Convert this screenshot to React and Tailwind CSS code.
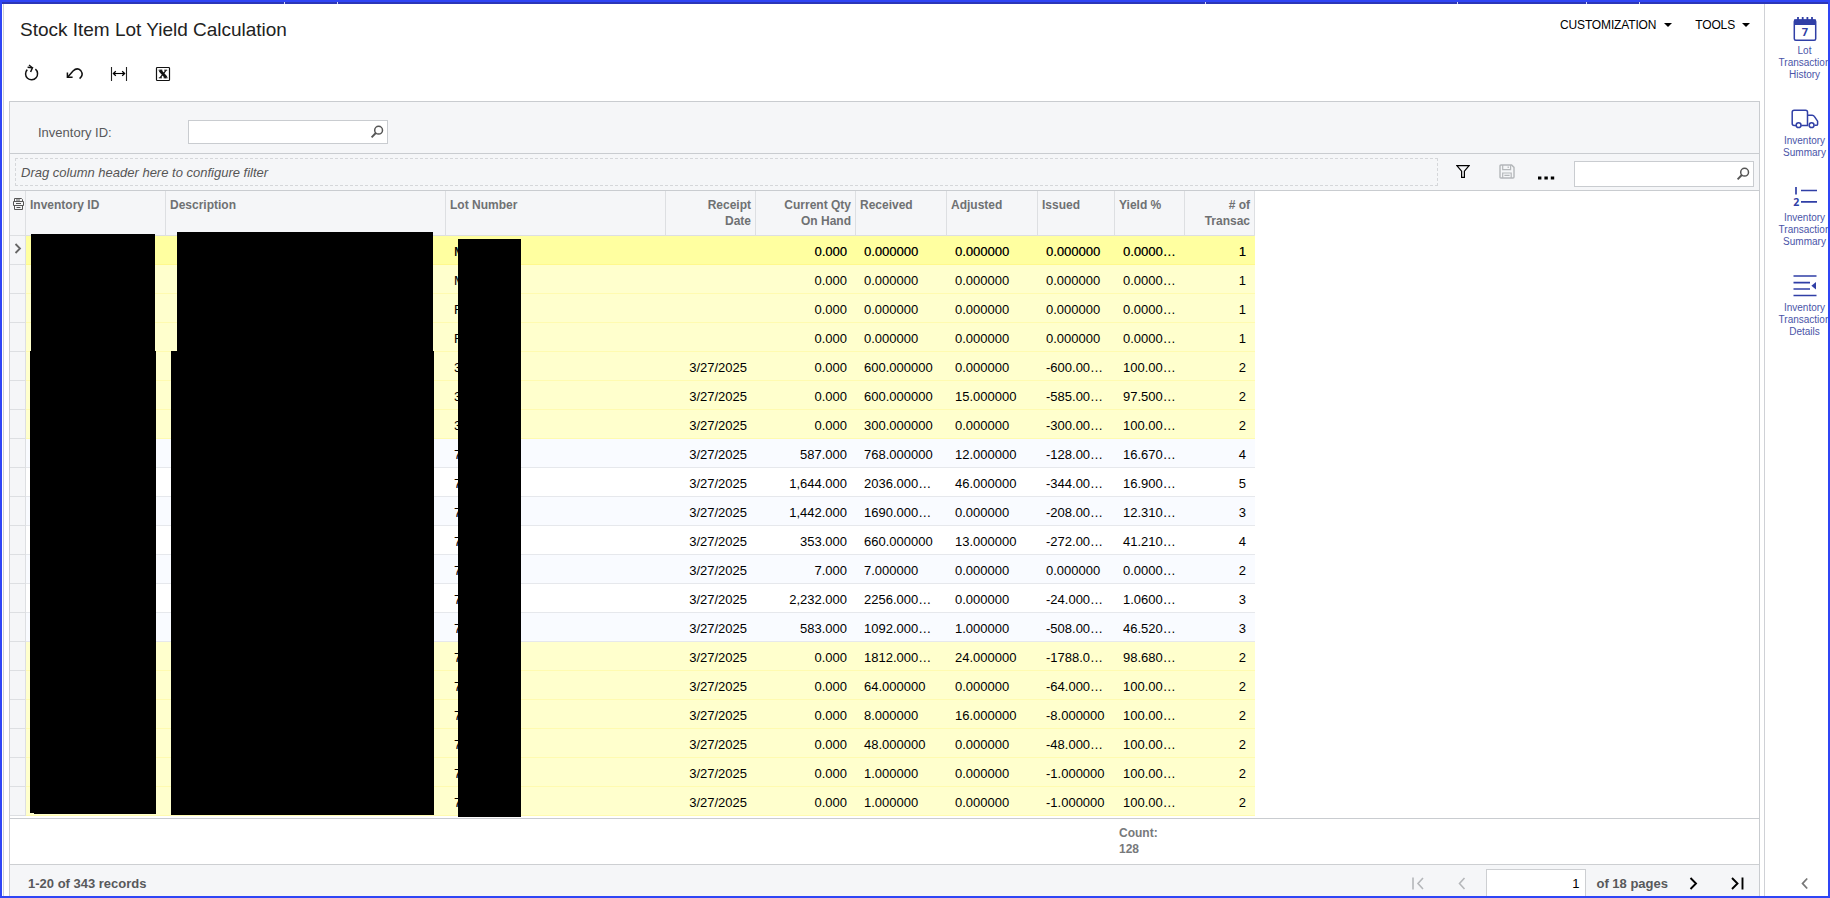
import React from "react";

const COLS = [
  { w: "w-[140px]", label: "Inventory ID" },
  { w: "w-[280px]", label: "Description" },
  { w: "w-[220px]", label: "Lot Number" },
  { w: "w-[90px]", label: "Receipt\nDate", right: true },
  { w: "w-[100px]", label: "Current Qty\nOn Hand", right: true },
  { w: "w-[91px]", label: "Received" },
  { w: "w-[91px]", label: "Adjusted" },
  { w: "w-[77px]", label: "Issued" },
  { w: "w-[70px]", label: "Yield %" },
  { w: "w-[70px]", label: "# of\nTransac", right: true },
];

const D = "3/27/2025";
const ROWS = [
  ["M", "", "0.000", "0.000000", "0.000000", "0.000000", "0.0000…", "1", "a"],
  ["M", "", "0.000", "0.000000", "0.000000", "0.000000", "0.0000…", "1", "y"],
  ["F", "", "0.000", "0.000000", "0.000000", "0.000000", "0.0000…", "1", "y"],
  ["F", "", "0.000", "0.000000", "0.000000", "0.000000", "0.0000…", "1", "y"],
  ["3", D, "0.000", "600.000000", "0.000000", "-600.00…", "100.00…", "2", "y"],
  ["3", D, "0.000", "600.000000", "15.000000", "-585.00…", "97.500…", "2", "y"],
  ["3", D, "0.000", "300.000000", "0.000000", "-300.00…", "100.00…", "2", "y"],
  ["7", D, "587.000", "768.000000", "12.000000", "-128.00…", "16.670…", "4", "e"],
  ["7", D, "1,644.000", "2036.000…", "46.000000", "-344.00…", "16.900…", "5", "w"],
  ["7", D, "1,442.000", "1690.000…", "0.000000", "-208.00…", "12.310…", "3", "e"],
  ["7", D, "353.000", "660.000000", "13.000000", "-272.00…", "41.210…", "4", "w"],
  ["7", D, "7.000", "7.000000", "0.000000", "0.000000", "0.0000…", "2", "e"],
  ["7", D, "2,232.000", "2256.000…", "0.000000", "-24.000…", "1.0600…", "3", "w"],
  ["7", D, "583.000", "1092.000…", "1.000000", "-508.00…", "46.520…", "3", "e"],
  ["7", D, "0.000", "1812.000…", "24.000000", "-1788.0…", "98.680…", "2", "y"],
  ["7", D, "0.000", "64.000000", "0.000000", "-64.000…", "100.00…", "2", "y"],
  ["7", D, "0.000", "8.000000", "16.000000", "-8.000000", "100.00…", "2", "y"],
  ["7", D, "0.000", "48.000000", "0.000000", "-48.000…", "100.00…", "2", "y"],
  ["7", D, "0.000", "1.000000", "0.000000", "-1.000000", "100.00…", "2", "y"],
  ["7", D, "0.000", "1.000000", "0.000000", "-1.000000", "100.00…", "2", "y"],
];

const TONE = {
  a: "bg-[#ffffa0] border-[#fff98c]",
  y: "bg-[#ffffcd] border-[#fffbb0]",
  e: "bg-[#f9fbff] border-[#e6e8ec]",
  w: "bg-white border-[#e6e8ec]",
};

function Magnifier() {
  return (
    <svg width="14" height="14" viewBox="0 0 14 14" fill="none" stroke="#555" strokeWidth="1.5">
      <circle cx="8.6" cy="5.2" r="3.9" />
      <path d="M5.8 8 L1.6 12.4" strokeWidth="1.9" />
    </svg>
  );
}

function Caret() {
  return (
    <svg width="8" height="4" viewBox="0 0 8 4">
      <path d="M0 0H8L4 4Z" fill="#000" />
    </svg>
  );
}

function Toolbar() {
  return (
    <div className="flex h-[22px] items-center pl-[17px]">
      <svg width="22" height="20" viewBox="0 0 22 20" fill="none" stroke="#111" strokeWidth="1.5">
        <path d="M6.3 5.6 A6 6 0 1 0 14.4 5.2" />
        <path d="M6.6 3.2 L11.4 3.8 L9.6 8" />
        <path d="M8 0.9 L11.4 3.8" strokeWidth="1.3" />
      </svg>
      <svg className="ml-[21px]" width="22" height="20" viewBox="0 0 22 20" fill="none" stroke="#111" strokeWidth="1.5">
        <path d="M3.8 13 L9 7 Q13.2 3 16.8 6.6 Q20 11 15.6 14.6" />
        <path d="M3.4 8.4 V13.3 H8.6" />
      </svg>
      <svg className="ml-[22px]" width="22" height="20" viewBox="0 0 22 20" fill="none" stroke="#222" strokeWidth="1.1">
        <path d="M3.5 3V17M18.5 3V17" />
        <path d="M5.5 9.5H16.5" stroke="#000" />
        <path d="M7.8 7.2 L5.4 9.5 L7.8 11.8 M14.2 7.2 L16.6 9.5 L14.2 11.8" stroke="#000" strokeWidth="1.3" />
      </svg>
      <svg className="ml-[22px]" width="22" height="20" viewBox="0 0 22 20" fill="none" stroke="#111" strokeWidth="1.2">
        <rect x="4.5" y="3.5" width="13" height="13" rx="0.8" />
        <path d="M8 6.5 L14.2 13.5" strokeWidth="2.8" />
        <path d="M14 6.3 L8.2 13.7" strokeWidth="1.2" />
        <path d="M6.6 6.2H10.4M12.2 6.2H15.2M6.8 13.8H10M11.6 13.8H15.6" strokeWidth="1" />
      </svg>
    </div>
  );
}

function SideItem({ icon, lines, className }) {
  return (
    <div className={"flex w-[79px] shrink-0 flex-col items-center " + className}>
      <div className="flex h-[29px] items-center justify-center pb-[4px]">{icon}</div>
      <div className="text-center text-[10px] leading-[12px] text-[#4a54a8]">
        {lines.map((l) => (
          <div key={l}>{l}</div>
        ))}
      </div>
    </div>
  );
}

function Sidebar() {
  const blue = "#303fa6";
  return (
    <div className="flex w-[64px] shrink-0 flex-col overflow-hidden border-l border-[#cfd1d6] bg-white">
      <SideItem
        className="mt-[12px] h-[90px]"
        lines={["Lot", "Transaction", "History"]}
        icon={
          <svg width="24" height="26" viewBox="0 0 24 26" fill="none" stroke={blue}>
            <rect x="1.3" y="4" width="21.4" height="20.3" rx="1.5" strokeWidth="1.5" />
            <path d="M1 3.5H23V9H1Z" fill={blue} stroke="none" />
            <path d="M5 1V5M9.7 1V5M14.4 1V5M19 1V5" strokeWidth="1.8" />
            <text x="12" y="20.2" textAnchor="middle" fontSize="11" fontWeight="700" fill={blue} stroke="none" fontFamily="Open Sans, sans-serif">7</text>
          </svg>
        }
      />
      <SideItem
        className="h-[77px]"
        lines={["Inventory", "Summary"]}
        icon={
          <svg width="28" height="22" viewBox="0 0 28 22" fill="none" stroke={blue} strokeWidth="1.5">
            <path d="M5.4 17.5H3.2Q1.2 17.5 1.2 15.5V4Q1.2 2.2 3.2 2.2H14.6Q16.5 2.2 16.5 4V17.5H10.2" />
            <path d="M16.5 7.2H21.2Q22.6 7.2 23.3 8.4L26.6 13.2V16.2Q26.6 17.3 25 17.3H23.4" />
            <circle cx="7.6" cy="17.2" r="2.4" />
            <circle cx="20.6" cy="17.2" r="2.4" />
          </svg>
        }
      />
      <SideItem
        className="h-[90px]"
        lines={["Inventory", "Transaction", "Summary"]}
        icon={
          <svg width="24" height="24" viewBox="0 0 24 24" fill="none" stroke={blue}>
            <path d="M3 3.1V10.5M8 6.5H24M8 17.8H24" strokeWidth="1.7" />
            <text x="0.2" y="22" fontSize="10.5" fontWeight="700" fill={blue} stroke="none" fontFamily="Open Sans, sans-serif">2</text>
          </svg>
        }
      />
      <SideItem
        className="h-[90px]"
        lines={["Inventory", "Transaction", "Details"]}
        icon={
          <svg width="24" height="24" viewBox="0 0 24 24" fill="none" stroke={blue}>
            <path d="M0.5 2H23.5M0.5 8.6H17M0.5 15H17M0.5 21.5H23.5" strokeWidth="1.6" />
            <path d="M23 8V15.6L18.4 11.8Z" fill={blue} stroke="none" />
          </svg>
        }
      />
      <div className="mt-auto flex pb-[6px] pl-[36px]">
        <svg width="8" height="13" viewBox="0 0 8 13" fill="none" stroke="#777" strokeWidth="1.8">
          <path d="M6.2 1.5L1.6 6.5L6.2 11.5" />
        </svg>
      </div>
    </div>
  );
}

function FilterBar() {
  return (
    <div className="flex h-[37px] border-t border-[#c9ccd0] bg-[#f5f6f8]">
      <div className="mt-[4px] ml-[5px] flex h-[28px] w-[1423px] items-center border border-dashed border-[#d5d7da] pt-[1px] pl-[5px] text-[13px] text-[#555] italic">
        Drag column header here to configure filter
      </div>
      <svg className="mt-[10px] ml-[18px]" width="14" height="15" viewBox="0 0 14 15" fill="none" stroke="#000" strokeWidth="1.2">
        <path d="M0.9 1.6H13.1L8.4 7.2V13.4H5.6V7.2Z" />
      </svg>
      <svg className="mt-[10px] ml-[29px]" width="16" height="15" viewBox="0 0 16 15" fill="none" stroke="#b4b7ba" strokeWidth="1.4">
        <path d="M1 2Q1 1 2 1H12.6L15 3.4V13Q15 14 14 14H2Q1 14 1 13Z" />
        <path d="M3.7 1V5.6H11.6V1M9.2 2.4V4M3.7 14V9H12.2V14M5.4 11.4H10.6" strokeWidth="1.2" />
      </svg>
      <svg className="mt-[22px] ml-[23px]" width="17" height="4" viewBox="0 0 17 4">
        <path d="M0 0.4H3.4V3.4H0ZM6.4 0.4H9.8V3.4H6.4ZM12.8 0.4H16.2V3.4H12.8Z" fill="#000" />
      </svg>
      <div className="mt-[7px] ml-[19px] flex h-[26px] w-[180px] justify-end border border-[#c9ccd0] bg-white pt-[5px] pr-[3px]">
        <Magnifier />
      </div>
    </div>
  );
}

function Grid() {
  return (
    <div className="flex h-[628px] flex-col border-t border-[#c9ccd0] bg-white">
      <div className="flex h-[45px] w-[1245px] border-b border-[#dddfe2] bg-[#f5f6f8] text-[12px] leading-[16px] font-bold text-[#6f7173]">
        <div className="w-[16px] border-r border-[#dddfe2] pt-[6px] pl-[3px]">
          <svg width="11" height="13" viewBox="0 0 11 13" fill="none" stroke="#555" strokeWidth="1">
            <path d="M1.5 4V1.5H8.5L9.5 2.5V4M1.5 8.5V12.5H9.5V8.5" />
            <path d="M0.5 4.5H10.5V8.5H0.5Z" />
            <path d="M3 3H7M3 6.5H8M3.5 10.5H7.5" />
          </svg>
        </div>
        {COLS.map((c) => (
          <div
            key={c.label}
            className={
              "shrink-0 border-r border-[#dddfe2] px-[4px] pt-[6px] whitespace-pre " + c.w + (c.right ? " text-right" : "")
            }
          >
            {c.label}
          </div>
        ))}
      </div>
      {ROWS.map((r, i) => {
        const cells = ["", "", ...r.slice(0, 8)];
        return (
          <div key={i} className="flex h-[29px] w-[1245px]">
            <div className="flex w-[16px] shrink-0 justify-center border-r border-b border-[#dddfe2] bg-[#f5f6f8] pt-[7px]">
              {i === 0 && (
                <svg width="8" height="11" viewBox="0 0 8 11" fill="none" stroke="#666" strokeWidth="1.8">
                  <path d="M1.5 1L6 5.5L1.5 10" />
                </svg>
              )}
            </div>
            <div className={"flex flex-1 border-b text-[13px] leading-[32px] text-black " + TONE[r[8]]}>
              {cells.map((v, j) => (
                <div
                  key={j}
                  className={
                    "h-[28px] shrink-0 overflow-hidden pr-[9px] pl-[8px] whitespace-nowrap " + COLS[j].w + (COLS[j].right ? " text-right" : "") +
                    (i === 0 ? " [text-shadow:0.3px_0_0_rgba(0,0,0,0.6)]" : "")
                  }
                >
                  {v}
                </div>
              ))}
            </div>
          </div>
        );
      })}
    </div>
  );
}

function Pager() {
  return (
    <div className="flex flex-1 border-t border-[#cdcfd2] bg-[#f5f6f8] pl-[18px] text-[13px] font-bold text-[#58595b]">
      <div className="mt-[10px] leading-[18px]">1-20 of 343 records</div>
      <svg className="mt-[12px] ml-auto" width="12" height="13" viewBox="0 0 12 13" fill="none" stroke="#b5b7ba" strokeWidth="1.6">
        <path d="M1 0.5V12.5M11 1L6 6.5L11 12" />
      </svg>
      <svg className="mt-[12px] ml-[34px]" width="8" height="13" viewBox="0 0 8 13" fill="none" stroke="#b5b7ba" strokeWidth="1.6">
        <path d="M6.5 1L1.5 6.5L6.5 12" />
      </svg>
      <div className="mt-[4px] ml-[20px] w-[100px] border border-b-0 border-[#cdcfd2] bg-white pt-[4px] pr-[6px] text-right leading-[19px] font-normal text-black">
        1
      </div>
      <div className="mt-[10px] ml-[10px] leading-[18px]">of 18 pages</div>
      <svg className="mt-[12px] ml-[21px]" width="9" height="13" viewBox="0 0 9 13" fill="none" stroke="#000" strokeWidth="1.9">
        <path d="M1.5 1L7 6.5L1.5 12" />
      </svg>
      <svg className="mt-[12px] mr-[15px] ml-[33px]" width="13" height="13" viewBox="0 0 13 13" fill="none" stroke="#000" strokeWidth="1.9">
        <path d="M1 1L6.5 6.5L1 12M11.5 0.5V12.5" />
      </svg>
    </div>
  );
}

const BLOCKS = [
  "left-[31px] top-[234px] w-[124px] h-[118px]",
  "left-[30px] top-[351px] w-[126px] h-[462px]",
  "left-[34px] top-[813px] w-[122px] h-[1px]",
  "left-[177px] top-[232px] w-[256px] h-[119px]",
  "left-[171px] top-[351px] w-[263px] h-[464px]",
  "left-[458px] top-[239px] w-[63px] h-[578px]",
];

const TICKS = [
  "left-[284px]",
  "left-[337px]",
  "left-[1205px]",
  "left-[1457px]",
  "left-[1586px]",
  "left-[1639px]",
];

export default function App() {
  return (
    <div className="relative flex h-[898px] w-[1830px] flex-col overflow-hidden border-2 border-[#2f45f5] bg-white font-['Liberation_Sans',Arial,sans-serif]">
      <div className="h-[2px] shrink-0 bg-[#2c36b8]" />
      <div className="flex min-h-0 flex-1">
        <div className="ml-[1px] flex flex-1 flex-col border-l border-[#cfd1d6]">
          <div className="flex h-[59px] justify-between">
            <h1 className="mt-[13px] ml-[16px] text-[19px] leading-[26px] text-[#222]">
              <span className="tracking-[-0.01px]">Stock Item Lot Yield Calculation</span>
            </h1>
            <div className="flex h-[42px] items-center pr-[14px] text-[12px] tracking-[-0.15px] text-black">
              <span>CUSTOMIZATION</span>
              <span className="ml-[8px]"><Caret /></span>
              <span className="ml-[23px]">TOOLS</span>
              <span className="ml-[7px]"><Caret /></span>
            </div>
          </div>
          <Toolbar />
          <div className="mt-[16px] mr-[4px] ml-[5px] flex flex-1 flex-col border border-b-0 border-[#c9ccd0]">
            <div className="flex h-[51px] items-center bg-[#f5f6f8] pl-[28px] text-[13px] text-[#58595b]">
              <div className="mt-[10px] w-[150px]">Inventory ID:</div>
              <div className="mt-[9px] flex h-[24px] w-[200px] items-center justify-end border border-[#c9ccd0] bg-white pr-[3px]">
                <Magnifier />
              </div>
            </div>
            <FilterBar />
            <Grid />
            <div className="h-[46px] border-t border-[#c9ccd0] bg-white pt-[6px] pl-[1109px] text-[12px] leading-[16px] font-bold text-[#77797b]">
              <div>Count:</div>
              <div>128</div>
            </div>
            <Pager />
          </div>
        </div>
        <Sidebar />
      </div>
      <div className="absolute -top-[2px] -left-[2px] h-0 w-0">
        {TICKS.map((t) => (
          <div key={t} className={"absolute top-[2px] h-[2px] w-[1px] bg-[#d5d8f5] " + t} />
        ))}
        {BLOCKS.map((b) => (
          <div key={b} className={"absolute bg-black " + b} />
        ))}
      </div>
    </div>
  );
}
